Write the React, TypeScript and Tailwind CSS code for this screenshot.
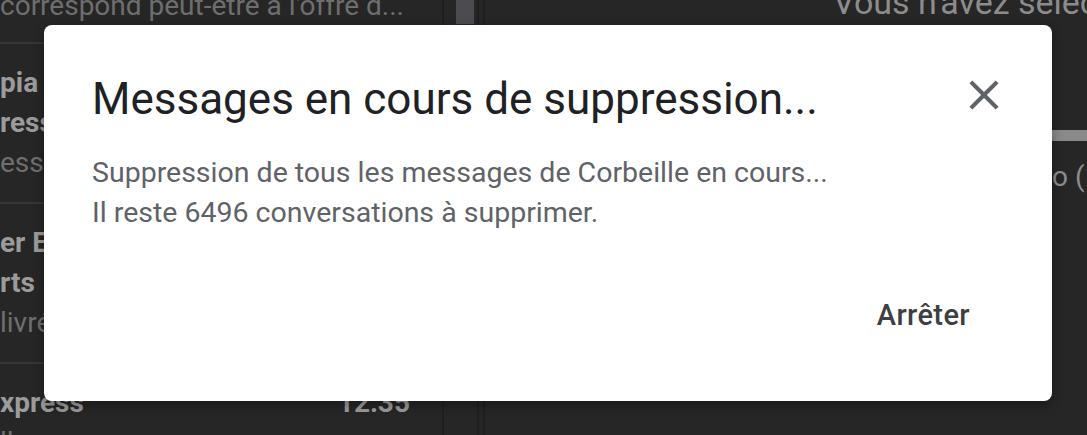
import React from "react";

const font = { fontFamily: "Roboto, 'Noto Sans', Arial, sans-serif" };

function ListRow({ lines, time, last }: { lines: { t: string; bold?: boolean }[]; time?: string; last?: boolean }) {
  return (
    <div className={`h-[160px] pt-[19px] ${last ? "" : "border-b-[2px] border-[#353535]"}`}>
      {lines.map((l, i) => (
        <div key={i} className="flex h-[40px] items-center justify-between pr-[32px] text-[28px] leading-[40px] whitespace-nowrap">
          <span className={l.bold ? "font-bold text-[#9b9b9b]" : "text-[#6e6e6e]"}>{l.t}</span>
          {i === 0 && time ? <span className="font-bold text-[#9b9b9b]">{time}</span> : null}
        </div>
      ))}
    </div>
  );
}

export default function App() {
  return (
    <div className="relative h-[435px] w-[1087px] overflow-hidden bg-[#262626]" style={font}>
      {/* Background Gmail */}
      <div className="flex h-full">
        <div className="w-[442px] shrink-0 overflow-hidden">
          <div className="h-[44px] overflow-hidden border-b-[2px] border-[#353535]">
            <div className="-mt-[14px] h-[40px] text-[28px] leading-[40px] whitespace-nowrap text-[#6e6e6e]">
              correspond peut-être à l'offre d...
            </div>
          </div>
          <ListRow lines={[{ t: "pia", bold: true }, { t: "ress", bold: true }, { t: "ess" }]} />
          <ListRow lines={[{ t: "er Eats", bold: true }, { t: "rts", bold: true }, { t: "livré" }]} />
          <ListRow last time="12:35" lines={[{ t: "xpress", bold: true }, { t: "   ll" }]} />
        </div>
        <div className="w-[2px] shrink-0 bg-[#1f1f1f]" />
        <div className="w-[12px] shrink-0" />
        <div className="w-[18px] shrink-0">
          <div className="h-[24px] bg-[#4c4c50]" />
        </div>
        <div className="w-[3px] shrink-0" />
        <div className="w-[2px] shrink-0 bg-[#1f1f1f]" />
        <div className="w-[4px] shrink-0" />
        <div className="w-[2px] shrink-0 bg-[#1f1f1f]" />
        <div className="relative flex-1 overflow-hidden">
          <div className="-mt-[20px] h-[44px] pl-[348px] text-[34px] leading-[44px] whitespace-nowrap text-[#8c8c8c]">
            Vous n'avez sélectionné aucune conversation
          </div>
          <div className="mt-[106px] ml-[567px] h-[11px] bg-[#8a8a8a]" />
          <div className="mt-[16px] pl-[567px] text-[28px] leading-[40px] whitespace-nowrap text-[#8c8c8c]">
            o (1 %)
          </div>
        </div>
      </div>

      {/* Dialog */}
      <div className="absolute left-[44px] top-[25px] flex h-[376px] w-[1008px] flex-col rounded-[8px] bg-white pl-[48px] pr-[43px] pt-[47px] shadow-[0_4px_12px_rgba(0,0,0,0.35)]">
        <div className="flex items-start justify-between">
          <h1 className="text-[44px] leading-[54px] font-normal text-[#202124] whitespace-nowrap">
            Messages en cours de suppression...
          </h1>
          <button className="-mt-[2px] flex h-[50px] w-[50px] items-center justify-center text-[#5f6368]" aria-label="Fermer">
            <svg viewBox="0 0 24 24" width="50" height="50" fill="currentColor">
              <path d="M19 6.41L17.59 5 12 10.59 6.41 5 5 6.41 10.59 12 5 17.59 6.41 19 12 13.41 17.59 19 19 17.59 13.41 12z" />
            </svg>
          </button>
        </div>
        <div className="mt-[27px] text-[28.5px] leading-[40px] text-[#5f6368]">
          <div>Suppression de tous les messages de Corbeille en cours...</div>
          <div>Il reste 6496 conversations à supprimer.</div>
        </div>
        <div className="mt-[62px] flex justify-end pr-[39px]">
          <button className="h-[40px] text-[29px] leading-[40px] font-medium tracking-[0.4px] text-[#3c4043]">Arrêter</button>
        </div>
      </div>
    </div>
  );
}
